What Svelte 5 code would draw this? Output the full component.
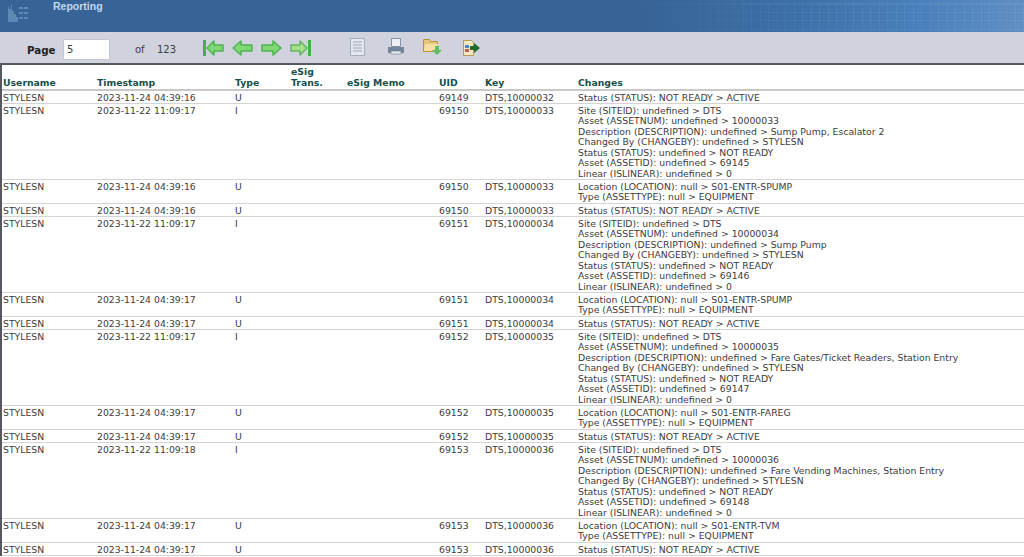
<script>
  const NR = 'Status (STATUS): NOT READY > ACTIVE';
  const insertChanges = (asset, desc, id) => [
    'Site (SITEID): undefined > DTS',
    `Asset (ASSETNUM): undefined > ${asset}`,
    `Description (DESCRIPTION): undefined > ${desc}`,
    'Changed By (CHANGEBY): undefined > STYLESN',
    'Status (STATUS): undefined > NOT READY',
    `Asset (ASSETID): undefined > ${id}`,
    'Linear (ISLINEAR): undefined > 0'
  ];
  const moved = (loc, type = 'EQUIPMENT') => [`Location (LOCATION): null > ${loc}`, `Type (ASSETTYPE): null > ${type}`];

  const rows = [
    ['2023-11-24 04:39:16', 'U', '69149', '10000032', [NR]],
    ['2023-11-22 11:09:17', 'I', '69150', '10000033', insertChanges('10000033', 'Sump Pump, Escalator 2', '69145')],
    ['2023-11-24 04:39:16', 'U', '69150', '10000033', moved('S01-ENTR-SPUMP')],
    ['2023-11-24 04:39:16', 'U', '69150', '10000033', [NR]],
    ['2023-11-22 11:09:17', 'I', '69151', '10000034', insertChanges('10000034', 'Sump Pump', '69146')],
    ['2023-11-24 04:39:17', 'U', '69151', '10000034', moved('S01-ENTR-SPUMP')],
    ['2023-11-24 04:39:17', 'U', '69151', '10000034', [NR]],
    ['2023-11-22 11:09:17', 'I', '69152', '10000035', insertChanges('10000035', 'Fare Gates/Ticket Readers, Station Entry', '69147')],
    ['2023-11-24 04:39:17', 'U', '69152', '10000035', moved('S01-ENTR-FAREG')],
    ['2023-11-24 04:39:17', 'U', '69152', '10000035', [NR]],
    ['2023-11-22 11:09:18', 'I', '69153', '10000036', insertChanges('10000036', 'Fare Vending Machines, Station Entry', '69148')],
    ['2023-11-24 04:39:17', 'U', '69153', '10000036', moved('S01-ENTR-TVM')],
    ['2023-11-24 04:39:17', 'U', '69153', '10000036', [NR]]
  ];
</script>

<div class="page">
  <header class="banner">
    <svg class="logo" width="22" height="18" viewBox="0 0 22 18">
      <path d="M0 17V2h1v2h2V0h1v6h2v3h2v3h2v5z" fill="#5c88b4" />
      <path d="M11 2h4v2h-4zM16 2h4v2h-4zM11 7h4v2h-4zM16 7h4v2h-4zM11 12h4v2h-4zM16 12h4v2h-4z" fill="#5c88b4" />
    </svg>
    <span class="title">Reporting</span>
    <div class="pattern"></div>
  </header>

  <div class="toolbar">
    <b class="page-label">Page</b>
    <div class="page-input">5</div>
    <span class="of">of</span>
    <span class="total">123</span>
    <div class="nav">
      <svg width="21" height="18" viewBox="0 0 21 18"><path d="M0 1h3v16H0z" fill="#45b04e" /><path d="M4 9l7-7v4h9v6h-9v4z" fill="#7fd873" stroke="#4db351" stroke-width="1.500" stroke-linejoin="round" /></svg>
      <svg width="21" height="18" viewBox="0 0 21 18"><path d="M1 9l8-7v4h11v6H9v4z" fill="#7fd873" stroke="#4db351" stroke-width="1.500" stroke-linejoin="round" /></svg>
      <svg width="21" height="18" viewBox="0 0 21 18"><path d="M20 9l-8-7v4H1v6h11v4z" fill="#7fd873" stroke="#4db351" stroke-width="1.500" stroke-linejoin="round" /></svg>
      <svg width="21" height="18" viewBox="0 0 21 18"><path d="M18 1h3v16h-3z" fill="#45b04e" /><path d="M17 9l-7-7v4H1v6h9v4z" fill="#a5e08b" stroke="#66b263" stroke-width="1.500" stroke-linejoin="round" /></svg>
    </div>
    <div class="tools">
      <svg width="15" height="18" viewBox="0 0 15 18"><path d="M.5.5h14v17H.5z" fill="#e4e7ee" stroke="#a7adbd" /><path d="M3 4h9M3 7h9M3 10h9M3 13h9" stroke="#a0a7b8" /></svg>
      <svg width="16" height="18" viewBox="0 0 16 18"><path d="M3.500.5h9v8h-9z" fill="#eef0f4" stroke="#8a92a2" /><path d="M0 9h16v6H0z" fill="#75869c" /><path d="M3 13h10v3H3z" fill="#e4e8ee" stroke="#56687e" stroke-width=".5" /></svg>
      <svg width="20" height="18" viewBox="0 0 20 18"><path d="M.5 1.500h6l1 2h7v10H.5z" fill="#e9c67a" stroke="#b7933f" /><path d="M2 6h13l-1 7H1z" fill="#f6dfa4" /><path d="M12 8h4v4h3l-5 5-5-5h3z" fill="#63bf5e" /></svg>
      <svg width="17" height="16" viewBox="0 0 17 16"><path d="M.5.500h8l2 2v13H.5z" fill="#f3e8c4" stroke="#b59b55" /><path d="M2 5h4v3H2z" fill="#4a86c8" /><path d="M2 9h4v3H2z" fill="#c75a5a" /><path d="M7 6h4V3l6 5-6 5v-3H7z" fill="#1f6b2d" /></svg>
    </div>
  </div>

  <div class="content">
    <table>
      <colgroup>
        <col style="width:94px" /><col style="width:138px" /><col style="width:56px" /><col style="width:56px" />
        <col style="width:92px" /><col style="width:46px" /><col style="width:93px" /><col />
      </colgroup>
      <thead>
        <tr>
          <th>Username</th><th>Timestamp</th><th>Type</th><th>eSig<br />Trans.</th>
          <th>eSig Memo</th><th>UID</th><th>Key</th><th>Changes</th>
        </tr>
      </thead>
      <tbody>
        {#each rows as [time, type, uid, key, changes]}
          <tr class:two={changes.length === 2}>
            <td>STYLESN</td>
            <td>{time}</td>
            <td>{type}</td>
            <td></td>
            <td></td>
            <td>{uid}</td>
            <td>DTS,{key}</td>
            <td>
              {#each changes as line}
                <div>{line}</div>
              {/each}
            </td>
          </tr>
        {/each}
      </tbody>
    </table>
  </div>
</div>

<style>
  :global(body) {
    margin: 0;
    background: #fff;
    overflow: hidden;
  }

  .page {
    height: 557px;
    overflow: hidden;
    font-family: "DejaVu Sans", Verdana, sans-serif;
    font-size: 9.3px;
    color: #3c3c3c;
  }

  .banner {
    position: relative;
    height: 32px;
    box-sizing: border-box;
    display: flex;
    align-items: flex-start;
    background: linear-gradient(90deg, #376396 0, #376396 62%, #3d70a8 78%, #4a80bb 90%, #5f8ec3 100%);
  }

  .pattern {
    position: absolute;
    top: 3px;
    right: 0;
    width: 400px;
    height: 27px;
    background-image:
      repeating-linear-gradient(90deg, rgba(255, 255, 255, .06) 0 1px, transparent 1px 8.500px),
      repeating-linear-gradient(0deg, rgba(255, 255, 255, .06) 0 1px, transparent 1px 8.500px);
    -webkit-mask-image: linear-gradient(90deg, transparent, #000 50%);
    mask-image: linear-gradient(90deg, transparent, #000 50%);
  }

  .logo {
    margin: 5px 0 0 8px;
  }

  .title {
    margin: 0 0 0 23px;
    font-family: "Liberation Sans", Arial, sans-serif;
    font-size: 10.5px;
    font-weight: bold;
    color: #c4d8ee;
  }

  .toolbar {
    height: 31px;
    display: flex;
    align-items: flex-start;
    background: #d0d3de;
    border-bottom: 2px solid #55585f;
    font-size: 10px;
  }

  .page-label {
    margin: 12px 0 0 27px;
    width: 36px;
    font-size: 10.300px;
    color: #222;
  }

  .page-input {
    margin-top: 7px;
    width: 47px;
    height: 21px;
    box-sizing: border-box;
    padding: 4px 0 0 3px;
    background: #fff;
    border: 1px solid #c5c7d0;
  }

  .of {
    margin: 12px 0 0 25px;
    width: 22px;
  }

  .total {
    margin-top: 12px;
    width: 46px;
  }

  .nav {
    margin-top: 7px;
    display: flex;
    gap: 8px;
  }

  .tools {
    margin: 6px 0 0 39px;
    display: flex;
    align-items: flex-start;
    gap: 23px;
  }

  .tools svg:nth-child(3) {
    margin-left: -4px;
  }

  .tools svg:nth-child(4) {
    margin: 2px 0 0 -3px;
  }

  .content {
    border-left: 2px solid #55585f;
  }

  table {
    width: 1022px;
    border-collapse: separate;
    border-spacing: 0;
    table-layout: fixed;
  }

  th {
    height: 26px;
    box-sizing: border-box;
    padding: 0 0 1px 1px;
    text-align: left;
    vertical-align: bottom;
    line-height: 10.500px;
    color: #14504a;
    font-weight: bold;
    border-bottom: 2px solid #c8c8c8;
  }

  td {
    padding: 1.500px 0 0 1px;
    vertical-align: top;
    line-height: 10.500px;
    white-space: nowrap;
    border-bottom: 1px solid #d4d4d4;
  }

  tr.two {
    height: 24px;
  }
</style>
